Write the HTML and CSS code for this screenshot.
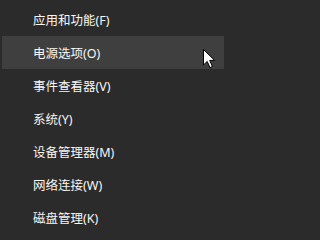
FILE: index.html
```html
<!DOCTYPE html>
<html lang="zh-CN">
<head>
<meta charset="utf-8">
<link rel="stylesheet" href="styles.css">
</head>
<body>
<div class="menu">
  <ul class="list">
    <li class="item">应用和功能(F)</li>
    <li class="item active">电源选项(O)</li>
    <li class="item">事件查看器(V)</li>
    <li class="item">系统(Y)</li>
    <li class="item">设备管理器(M)</li>
    <li class="item">网络连接(W)</li>
    <li class="item">磁盘管理(K)</li>
  </ul>
  <svg class="cursor" width="13" height="20" viewBox="0 0 13 20">
    <path d="M0.5 0.5 L0.5 16 L4.2 12.4 L7 18.6 L9.4 17.5 L6.7 11.4 L11.6 11.4 Z" fill="#fff" stroke="#000" stroke-width="1" stroke-linejoin="miter"/>
  </svg>
</div>
</body>
</html>
```
FILE: styles.css
```css
html, body {
  margin: 0;
  padding: 0;
  background: #2b2b2b;
}
.menu {
  position: relative;
  width: 224px;
  height: 238px;
  background: #2b2b2b;
  overflow: hidden;
}
.list {
  list-style: none;
  margin: 0;
  padding: 3px 0 0 2px;
}
.item {
  box-sizing: border-box;
  height: 33px;
  padding-top: 2px;
  line-height: 31px;
  padding-left: 31px;
  color: #f7f7f7;
  font-family: "Noto Sans", "Noto Sans CJK SC", sans-serif;
  font-size: 12.5px;
  white-space: nowrap;
}
.item.active {
  background: #3f3f3f;
}
.cursor {
  position: absolute;
  left: 203px;
  top: 49px;
}
```
